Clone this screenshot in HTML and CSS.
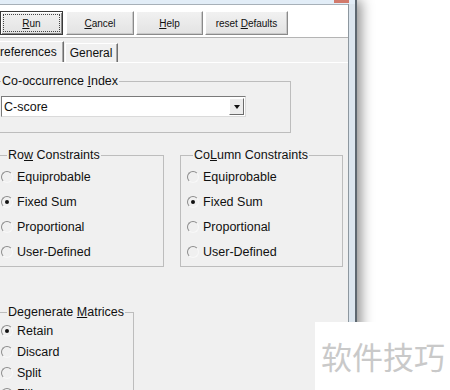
FILE: index.html
```html
<!DOCTYPE html>
<html lang="en">
<head>
  <meta charset="UTF-8" />
  <title>Preferences</title>
  <link rel="stylesheet" href="styles.css">
</head>
<body>
  <div class="window">
    <div class="titlebar">
      <div class="close-btn"></div>
    </div>
    <div class="client">
      <!-- Toolbar -->
      <div class="toolbar">
        <button class="btn btn-default w-run"><span class="focus"><u>R</u>un</span></button>
        <button class="btn w-cancel"><u>C</u>ancel</button>
        <button class="btn w-help"><u>H</u>elp</button>
        <button class="btn w-reset">reset <u>D</u>efaults</button>
      </div>

      <!-- Tabs -->
      <div class="tabs">
        <div class="tab active">Preferences</div>
        <div class="tab">General</div>
      </div>

      <div class="panel">
        <fieldset class="group group-index">
          <legend>Co-occurrence <u>I</u>ndex</legend>
          <div class="combo">
            <span class="combo-text">C-score</span>
            <span class="combo-btn"><span class="arrow"></span></span>
          </div>
        </fieldset>

        <div class="constraints">
          <fieldset class="group group-row">
            <legend>Ro<u>w</u> Constraints</legend>
            <label class="radio-row"><span class="radio"></span>Equiprobable</label>
            <label class="radio-row"><span class="radio checked"></span>Fixed Sum</label>
            <label class="radio-row"><span class="radio"></span>Proportional</label>
            <label class="radio-row"><span class="radio"></span>User-Defined</label>
          </fieldset>
          <fieldset class="group group-col">
            <legend>Co<u>L</u>umn Constraints</legend>
            <label class="radio-row"><span class="radio"></span>Equiprobable</label>
            <label class="radio-row"><span class="radio checked"></span>Fixed Sum</label>
            <label class="radio-row"><span class="radio"></span>Proportional</label>
            <label class="radio-row"><span class="radio"></span>User-Defined</label>
          </fieldset>
        </div>

        <fieldset class="group group-degen">
          <legend>Degenerate <u>M</u>atrices</legend>
          <label class="radio-row small"><span class="radio checked"></span>Retain</label>
          <label class="radio-row small"><span class="radio"></span>Discard</label>
          <label class="radio-row small"><span class="radio"></span>Split</label>
          <label class="radio-row small"><span class="radio"></span>Fill</label>
        </fieldset>
      </div>
    </div>
  </div>

  <div class="watermark">软件技巧</div>
</body>
</html>
```

FILE: styles.css
```css
body {
  margin: 0;
  background-color: #ffffff;
  font-family: "Liberation Sans", Arial, sans-serif;
  font-size: 12.5px;
  color: #111;
  overflow: hidden;
  height: 390px;
}
u {
  text-decoration: underline;
  text-underline-offset: 1px;
}
.window {
  margin-left: -14px;
  width: 363px;
  background-color: #dbe5ee;
  padding-right: 6px;
  border-right: 2px solid #5d6770;
  box-shadow: 4px 0 12px rgba(0,0,0,0.45);
}
.titlebar {
  height: 4px;
  background-color: #e2edf7;
  display: flex;
  justify-content: flex-end;
  margin-right: -6px;
}
.close-btn {
  width: 15px;
  height: 3px;
  background-color: #d27a6c;
  margin-right: 6px;
}
.client {
  background-color: #f0f0f0;
  border-right: 1px solid #8d979f;
  height: 386px;
  overflow: hidden;
}
.toolbar {
  background-color: #ffffff;
  border-top: 1px solid #a7b0b8;
  border-bottom: 1px solid #b4b4b4;
  padding: 6px 0 0 14px;
  box-sizing: border-box;
  height: 34px;
  display: flex;
  align-items: flex-start;
}
.btn {
  height: 24px;
  margin: 0 2px 0 0;
  padding: 0;
  font-family: "Liberation Sans", Arial, sans-serif;
  font-size: 10px;
  color: #111;
  background: linear-gradient(#f1f1f1, #e3e3e3);
  border: 1px solid;
  border-color: #ffffff #8a8a8a #8a8a8a #ffffff;
  box-shadow: inset -1px -1px 0 #c9c9c9;
}
.btn-default {
  border: 1px solid #3a3a3a;
  box-shadow: inset 1px 1px 0 #fff, inset -1px -1px 0 #8a8a8a;
  margin-right: 3px;
  padding: 2px;
}
.btn-default .focus {
  display: flex;
  align-items: center;
  justify-content: center;
  height: 100%;
  border: 1px dotted #444;
  box-sizing: border-box;
}
.w-run { width: 63px; }
.w-cancel { width: 68px; }
.w-help { width: 67px; }
.w-reset { width: 83px; }

.tabs {
  display: flex;
  align-items: flex-end;
  height: 24px;
  padding-left: 2px;
  border-bottom: 1px solid #ffffff;
}
.tab {
  font-size: 12px;
  white-space: nowrap;
  border-left: 1px solid #ffffff;
  border-top: 1px solid #ffffff;
  border-right: 1px solid #6f6f6f;
  box-shadow: inset -1px 0 0 #a8a8a8;
  padding: 0 5px 0 4px;
  height: 18px;
  line-height: 19px;
}
.tab.active {
  height: 20px;
  line-height: 21px;
  padding: 0 6px 0 3px;
  margin-right: 1px;
}
.panel {
  padding-left: 8px;
}
.group {
  margin: 0;
  padding: 0;
  border: 1px solid #bdbdbd;
  box-sizing: border-box;
  min-width: 0;
}
.group legend {
  margin-left: 6px;
  padding: 0 1px;
  line-height: 14px;
}
.group-index {
  width: 297px;
  margin-top: 11px;
}
.combo {
  width: 245px;
  height: 21px;
  margin: 8px 0 15px 6px;
  box-sizing: border-box;
  background-color: #fff;
  border: 1px solid;
  border-color: #7a7a7a #dadada #dadada #7a7a7a;
  display: flex;
  align-items: center;
  justify-content: space-between;
}
.combo-text {
  padding-left: 2px;
}
.combo-btn {
  width: 15px;
  height: 17px;
  margin-right: 1px;
  box-sizing: border-box;
  background-color: #ececec;
  border: 1px solid;
  border-color: #ffffff #6b6b6b #6b6b6b #ffffff;
  display: flex;
  align-items: center;
  justify-content: center;
}
.arrow {
  width: 0;
  height: 0;
  border-left: 3.5px solid transparent;
  border-right: 3.5px solid transparent;
  border-top: 4px solid #111;
}
.constraints {
  display: flex;
  gap: 16px;
  margin-top: 15px;
}
.group-row,
.group-col {
  padding: 2px 0 2px 6px;
}
.group-row { width: 170px; }
.group-col { width: 163px; }
.radio-row {
  display: flex;
  align-items: center;
  gap: 4px;
  height: 25px;
}
.radio-row.small {
  height: 21px;
}
.radio {
  width: 12px;
  height: 12px;
  box-sizing: border-box;
  border-radius: 50%;
  border: 1px solid;
  border-color: #8c8c8c #f8f8f8 #f8f8f8 #8c8c8c;
  position: relative;
  flex-shrink: 0;
}
.radio.checked::after {
  content: "";
  position: absolute;
  left: 3px;
  top: 3px;
  width: 4px;
  height: 4px;
  border-radius: 50%;
  background-color: #111;
}
.group-degen {
  width: 140px;
  margin-top: 38px;
  padding: 1px 0 0 6px;
}
.watermark {
  position: absolute;
  left: 315px;
  top: 322px;
  width: 135px;
  height: 68px;
  background-color: #ffffff;
  color: #c9c9c9;
  font-family: "Noto Sans CJK SC", sans-serif;
  font-size: 31px;
  line-height: 68px;
  padding-left: 6px;
  box-sizing: border-box;
}
```
